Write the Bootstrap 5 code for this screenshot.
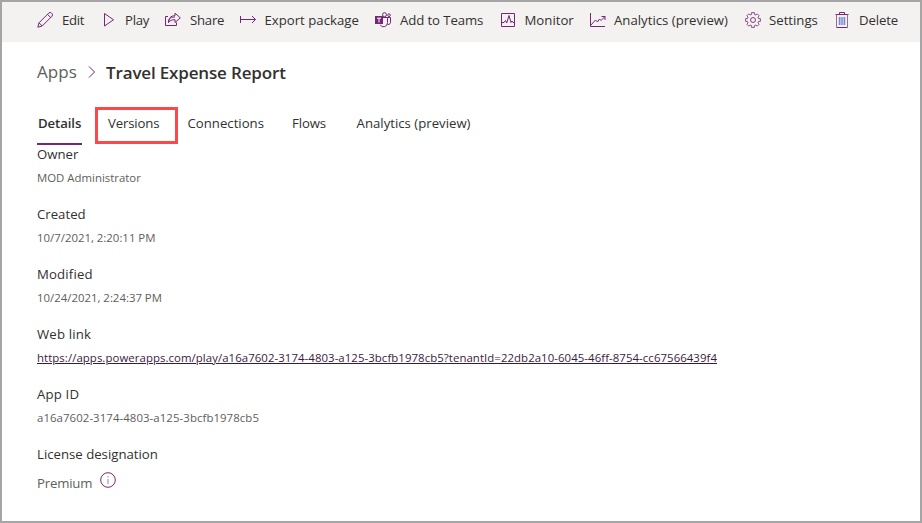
<!DOCTYPE html>
<html lang="en">
<head>
<meta charset="utf-8">
<meta name="viewport" content="width=device-width, initial-scale=1">
<title>Travel Expense Report</title>
<link href="https://cdn.jsdelivr.net/npm/bootstrap@5.3.0/dist/css/bootstrap.min.css" rel="stylesheet">
<style>
body{font-family:"Open Sans","Noto Sans",sans-serif;font-size:13.2px;line-height:20px;color:#323130;background:#fff;overflow:hidden}
.frame{height:523px;border:2px solid #a5a5a5}
/* command bar */
.cmdbar{height:40px;background:#f3f2f1;padding-left:35px}
.cmd{flex:none;height:36px;gap:9px;color:#323130;background:none;border:0;padding:0;white-space:nowrap}
.cmd svg{width:16px;height:16px;flex:none;fill:none;stroke:#742774;stroke-width:1}
.cmd:nth-child(1){width:64px;letter-spacing:-.3px}
.cmd:nth-child(2){width:64px;letter-spacing:-.25px;gap:8px}
.cmd:nth-child(3){width:75px;letter-spacing:-.25px}
.cmd:nth-child(4){width:135px;gap:8.5px}
.cmd:nth-child(5){width:125px;letter-spacing:-.1px}
.cmd:nth-child(6){width:90px;gap:8.500px}
.cmd:nth-child(7){width:155px;gap:8px}
.cmd:nth-child(8){width:89px;gap:8px}
.cmd:nth-child(9){letter-spacing:-.12px}
/* breadcrumb */
.crumbs{padding:18px 0 0 35px;height:64px;font-size:17px;line-height:24px;white-space:nowrap}
.crumbs .up{color:#605e5c;letter-spacing:.1px}
.crumbs svg{width:8px;height:12px;margin:6px 10px 0 11px;fill:none;stroke:#742774;stroke-width:1}
.crumbs .here{font-weight:600;letter-spacing:-.16px;padding-top:1px}
/* tabs */
.tabs{height:38px;padding-left:35px}
.tab{height:39px;line-height:34px;white-space:nowrap}
.tab.on{font-weight:600;letter-spacing:-.1px;border-bottom:2px solid #742774;width:45px;padding-left:1px}
.picked{border:3px solid #fb4848;width:83px;height:37px;margin:1px 9.5px 0 13px;padding-left:10px;line-height:27px;letter-spacing:-.15px}
.tab.flows{margin:0 30.500px 0 28px;letter-spacing:-.1px}
/* details list */
.facts{padding-left:35px}
.facts dt{font-weight:400;line-height:20px;height:20px}
.facts dd{font-size:11.4px;line-height:20px;margin:4px 0 16px;height:20px;color:#605e5c;white-space:nowrap}
.facts a{color:#3b1a40;letter-spacing:.069px}
.wider{letter-spacing:.16px}
.guid{letter-spacing:.08px}
.facts .tier{font-size:13.2px;margin-top:9px;letter-spacing:-.2px}
.tier svg{width:16px;height:16px;margin:-1px 0 0 8px;fill:none;stroke:#742774}
</style>
</head>
<body>
<main class="frame">
<div class="cmdbar d-flex">
<button class="cmd d-flex align-items-center"><svg viewBox="0 0 16 16"><path d="M.8 15.200 2 10.800 11.700 1.100a1.900 1.900 0 0 1 2.800 0l.4.4a1.900 1.900 0 0 1 0 2.800L5.200 14ZM2 10.800 5.200 14M10.500 2.300l3.200 3.200"/></svg><span>Edit</span></button>
<button class="cmd d-flex align-items-center"><svg viewBox="0 0 16 16"><path d="M3.500 1.500v12.500l9-6.250Z"/></svg><span>Play</span></button>
<button class="cmd d-flex align-items-center"><svg viewBox="0 0 16 16"><path d="M3 4.500H.5v9h11V10.500M3.500 10.500c0-4 3-5.500 6.500-5.500M3.500 10.500c1.500-2 3.500-2.800 6.500-2.800V10.500L15.300 5.800 10 1.200v2.500C5.500 3.700 3.500 6.500 3.500 10.500Z"/></svg><span>Share</span></button>
<button class="cmd d-flex align-items-center"><svg viewBox="0 0 16 16"><path d="M.5 4v7M.5 7.500H15.500M12 4 15.500 7.500 12 11"/></svg><span>Export package</span></button>
<button class="cmd d-flex align-items-center"><svg viewBox="0 0 16 16"><circle cx="9.500" cy="2.700" r="2"/><circle cx="14" cy="3.200" r="1.300"/><path d="M8 5.500h4.500v5a4 4 0 0 1-7.300 2.500M12.500 5.500h3v5a2.500 2.500 0 0 1-3 2"/><path d="M0 4h8v8H0Z" fill="#742774" stroke="none"/><path d="M2 6.200h4M4 6.200v4.300" stroke="#fff"/></svg><span>Add to Teams</span></button>
<button class="cmd d-flex align-items-center"><svg viewBox="0 0 16 16"><path d="M1.500 1.500h13v13h-13ZM2 10.500h2l1.500-2 1.200 2.500 2.300-7.500 2 7 1-1.500 1 1.500H14"/></svg><span>Monitor</span></button>
<button class="cmd d-flex align-items-center"><svg viewBox="0 0 16 16"><path d="M.5 1v13.500H15M1 13l4.500-5 2 2 2-3 1.500 1.500 4-4M11.500 4.500H15v3.500"/></svg><span>Analytics (preview)</span></button>
<button class="cmd d-flex align-items-center"><svg viewBox="0 0 16 16"><path stroke-width=".8" stroke-linejoin="round" d="M13.600 6.600 15.400 6.600 15.400 9.400 13.600 9.400 12.950 10.970 14.200 12.200 12.200 14.200 10.970 12.950 9.400 13.600 9.400 15.400 6.600 15.400 6.600 13.600 5.030 12.950 3.800 14.200 1.800 12.200 3.050 10.970 2.400 9.400.6 9.400.6 6.600 2.400 6.600 3.050 5.030 1.800 3.800 3.800 1.800 5.030 3.050 6.600 2.400 6.600.6 9.400.6 9.400 2.400 10.970 3.050 12.200 1.800 14.200 3.800 12.950 5.030Z"/><circle cx="8" cy="8" r="2.500" stroke-width=".9"/></svg><span>Settings</span></button>
<button class="cmd d-flex align-items-center"><svg viewBox="0 0 16 16"><path d="M4.500 5h7v8h-7Z" fill="#b4c4ee" stroke="none"/><path d="M1.500 2.500h13M5.500 2.500v-2h5v2M2.500 15.500h11"/><path d="M2.500 2.500v13M13.500 2.500v13" stroke="#a0689a"/><path d="M5.500 5v8M8 5v8M10.500 5v8" stroke="#7a86cc"/></svg><span>Delete</span></button>
</div>
<div class="crumbs d-flex align-items-start"><span class="up">Apps</span><svg viewBox="0 0 8 12"><path d="M1 .5 6.500 6 1 11.500"/></svg><span class="here">Travel Expense Report</span></div>
<div class="tabs d-flex"><div class="tab on">Details</div><div class="picked">Versions</div><div class="tab">Connections</div><div class="tab flows">Flows</div><div class="tab">Analytics (preview)</div></div>
<dl class="facts mb-0">
<dt>Owner</dt><dd>MOD Administrator</dd>
<dt>Created</dt><dd>10/7/2021, 2:20:11 PM</dd>
<dt class="wider">Modified</dt><dd>10/24/2021, 2:24:37 PM</dd>
<dt class="wider">Web link</dt><dd><a href="#">https://apps.powerapps.com/play/a16a7602-3174-4803-a125-3bcfb1978cb5?tenantId=22db2a10-6045-46ff-8754-cc67566439f4</a></dd>
<dt class="wider">App ID</dt><dd class="guid">a16a7602-3174-4803-a125-3bcfb1978cb5</dd>
<dt>License designation</dt><dd class="tier d-flex align-items-start"><span>Premium</span><svg viewBox="0 0 16 16"><circle cx="8" cy="8" r="7.300"/><path d="M8 7v5M8 4v1.500" stroke="#8a80b8"/></svg></dd>
</dl>
</main>
</body>
</html>
